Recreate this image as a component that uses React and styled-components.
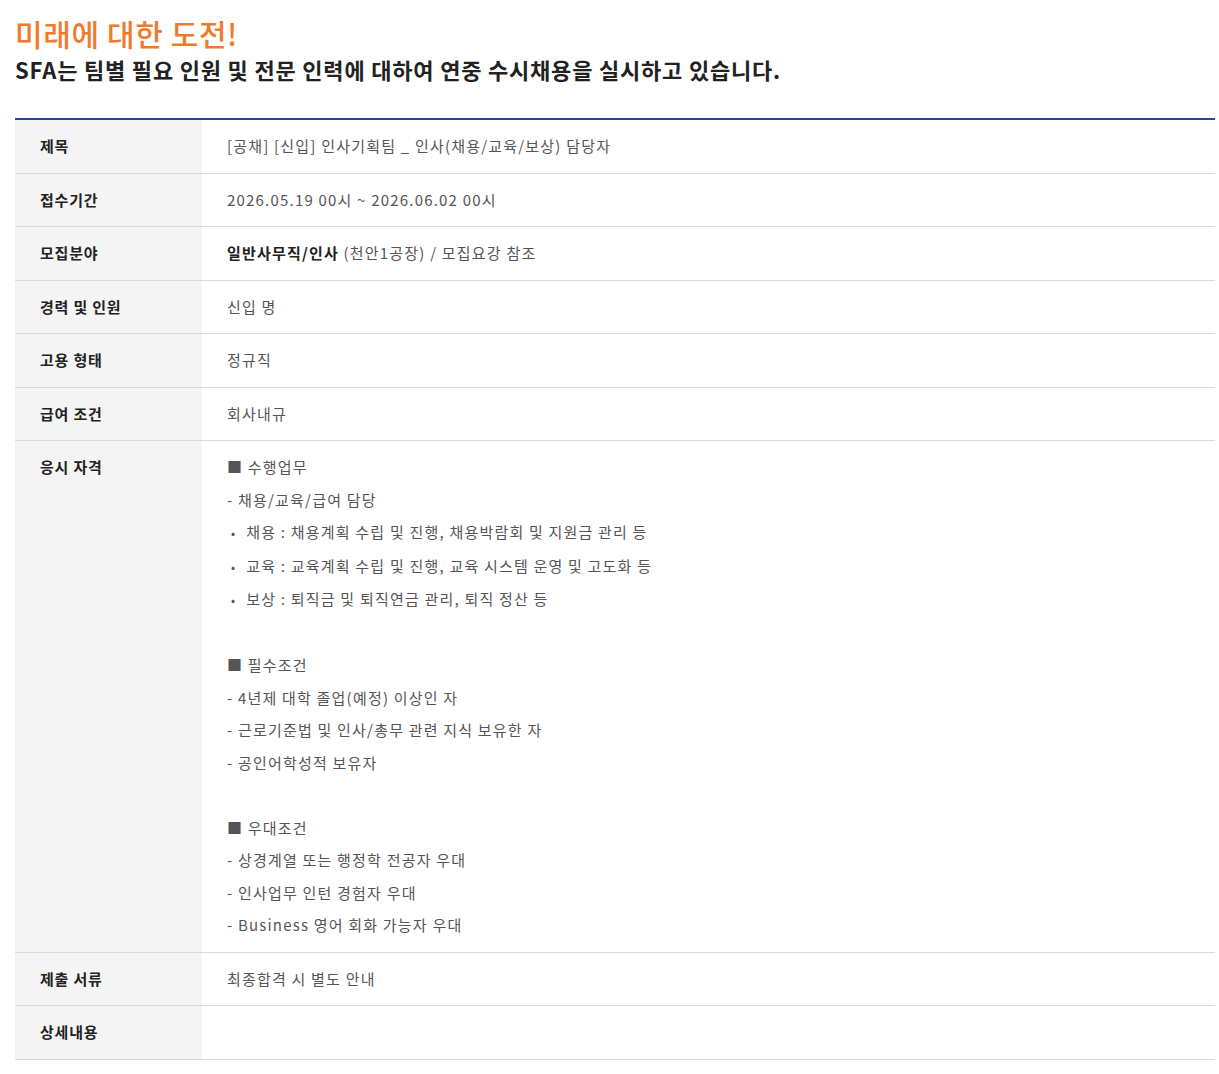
import React from "react";
import styled, { createGlobalStyle } from "styled-components";

const Global = createGlobalStyle`
  body { margin: 0; font-family: "Noto Sans CJK KR", "Noto Sans", sans-serif; background: #fff; }
`;
const Page = styled.div` padding: 12px 4px 16px 15px; `;
const Title = styled.h1`
  margin: 0; font-size: 30px; font-weight: 500; color: #f07a2c; line-height: 42px; letter-spacing: 0.6px;
`;
const Sub = styled.h2`
  margin: 0; font-size: 22px; font-weight: 700; color: #222; line-height: 30px; letter-spacing: 0.8px;
`;
const Table = styled.div` margin-top: 34px; border-top: 2px solid #1e4c96; `;
const Row = styled.div`
  display: grid; grid-template-columns: 187px 1fr; border-bottom: 1px solid #d9d9d9;
  font-size: 15px; line-height: 32.5px; letter-spacing: 1.2px;
`;
const Label = styled.div`
  background: #f4f4f4; padding: 10px 25px; font-weight: 700; color: #222; letter-spacing: 0.8px;
`;
const Value = styled.div` padding: 10px 25px; color: #555; `;
const Strong = styled.b` color: #222; `;
const Line = styled.div` min-height: 32.5px; `;
const Bullet = styled.div` padding-left: 4px; &::before { content: "•"; margin-right: 10px; font-size: 12px; } `;

const rows = [
  ["제목", "[공채] [신입] 인사기획팀 _ 인사(채용/교육/보상) 담당자"],
  ["접수기간", "2026.05.19 00시 ~ 2026.06.02 00시"],
  ["모집분야", <><Strong>일반사무직/인사</Strong> (천안1공장) / 모집요강 참조</>],
  ["경력 및 인원", "신입 명"],
  ["고용 형태", "정규직"],
  ["급여 조건", "회사내규"],
  ["응시 자격", <>
    <Line>■ 수행업무</Line>
    <Line>- 채용/교육/급여 담당</Line>
    <Bullet>채용 : 채용계획 수립 및 진행, 채용박람회 및 지원금 관리 등</Bullet>
    <Bullet>교육 : 교육계획 수립 및 진행, 교육 시스템 운영 및 고도화 등</Bullet>
    <Bullet>보상 : 퇴직금 및 퇴직연금 관리, 퇴직 정산 등</Bullet>
    <Line />
    <Line>■ 필수조건</Line>
    <Line>- 4년제 대학 졸업(예정) 이상인 자</Line>
    <Line>- 근로기준법 및 인사/총무 관련 지식 보유한 자</Line>
    <Line>- 공인어학성적 보유자</Line>
    <Line />
    <Line>■ 우대조건</Line>
    <Line>- 상경계열 또는 행정학 전공자 우대</Line>
    <Line>- 인사업무 인턴 경험자 우대</Line>
    <Line>- Business 영어 회화 가능자 우대</Line>
  </>],
  ["제출 서류", "최종합격 시 별도 안내"],
  ["상세내용", ""],
];

export default function App() {
  return (
    <Page>
      <Global />
      <Title>미래에 대한 도전!</Title>
      <Sub>SFA는 팀별 필요 인원 및 전문 인력에 대하여 연중 수시채용을 실시하고 있습니다.</Sub>
      <Table>
        {rows.map(([l, v], i) => (
          <Row key={i}><Label>{l}</Label><Value>{v}</Value></Row>
        ))}
      </Table>
    </Page>
  );
}
